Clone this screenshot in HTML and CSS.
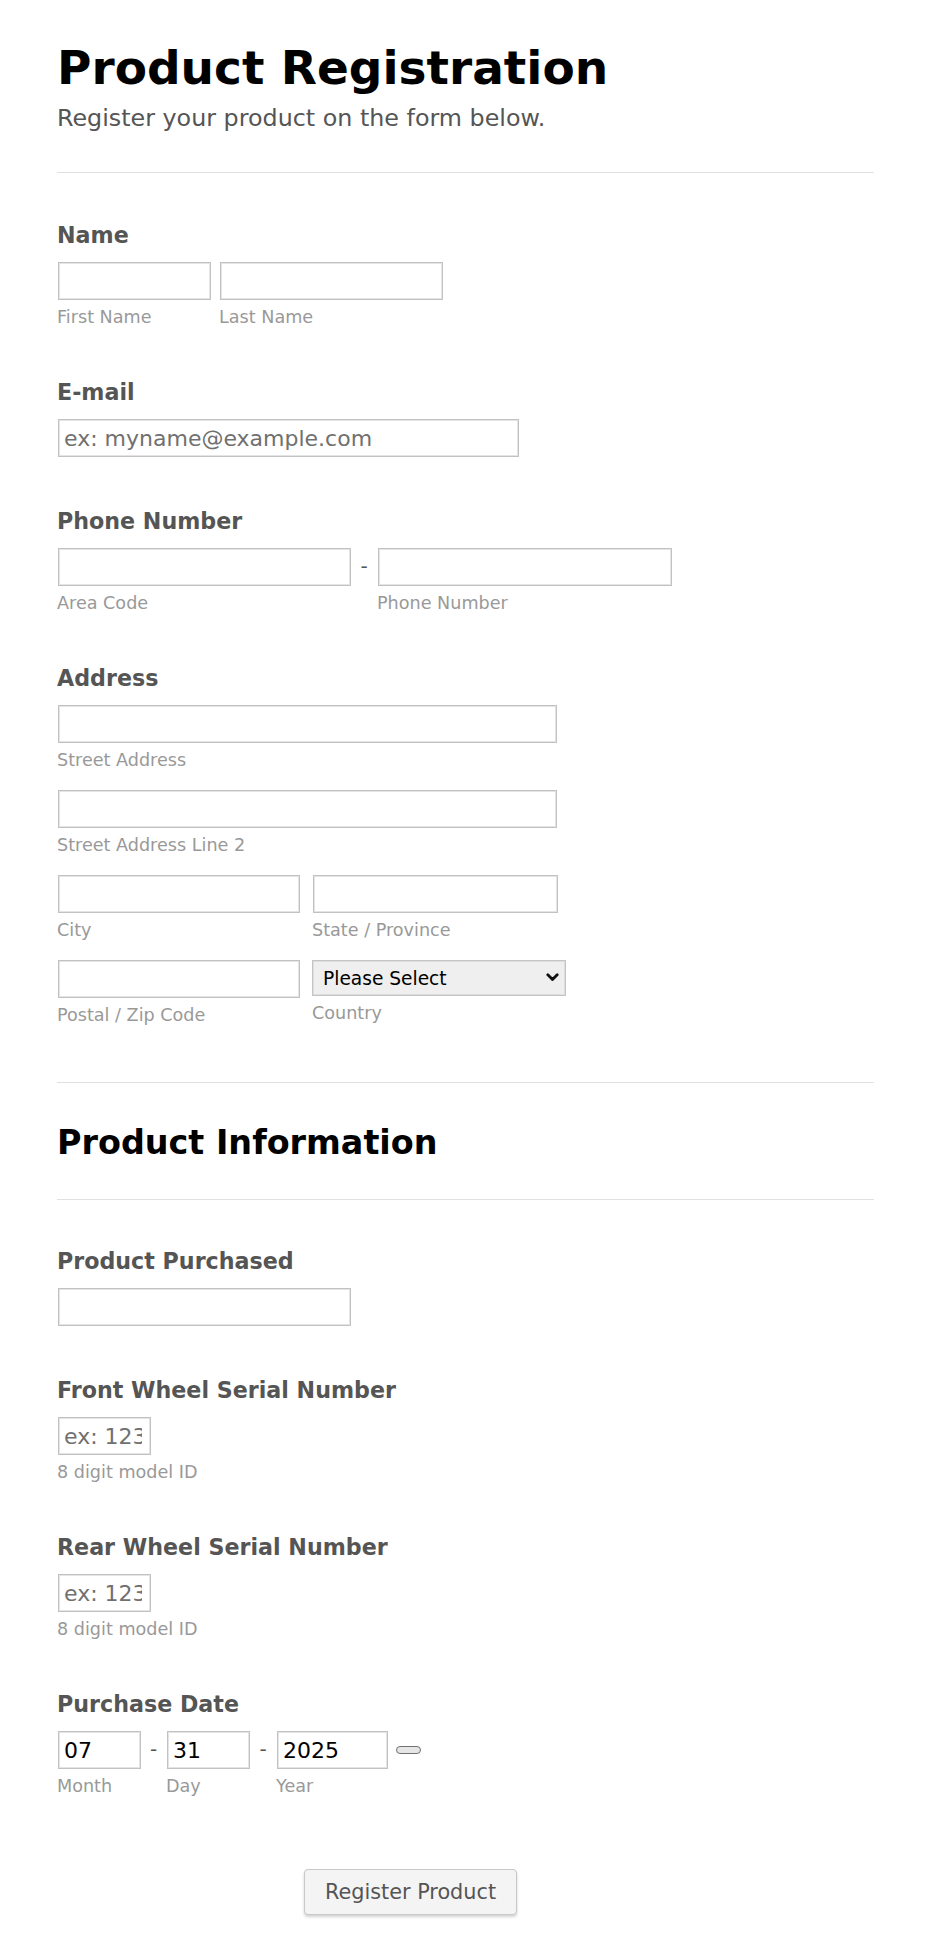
FILE: index.html
```html
<!DOCTYPE html>
<html lang="en">
<head>
<meta charset="utf-8">
<title>Product Registration</title>
<link rel="stylesheet" href="styles.css">
</head>
<body>
<form class="form">
  <header class="header">
    <h1 class="title">Product Registration</h1>
    <p class="subtitle">Register your product on the form below.</p>
  </header>
  <hr class="divider">

  <div class="fields">
    <div class="field">
      <label class="label">Name</label>
      <div class="row gap8">
        <div class="col"><input class="input w-first" type="text"><span class="sub">First Name</span></div>
        <div class="col"><input class="input w-last" type="text"><span class="sub">Last Name</span></div>
      </div>
    </div>

    <div class="field">
      <label class="label">E-mail</label>
      <input class="input w-email" type="text" placeholder="ex: myname@example.com">
    </div>

    <div class="field">
      <label class="label">Phone Number</label>
      <div class="row">
        <div class="col"><input class="input w-phone" type="text"><span class="sub">Area Code</span></div>
        <span class="sep sep-phone">-</span>
        <div class="col"><input class="input w-phone2" type="text"><span class="sub">Phone Number</span></div>
      </div>
    </div>

    <div class="field">
      <label class="label">Address</label>
      <div class="address">
        <div class="col"><input class="input w-street" type="text"><span class="sub">Street Address</span></div>
        <div class="col"><input class="input w-street" type="text"><span class="sub">Street Address Line 2</span></div>
        <div class="row gap12">
          <div class="col"><input class="input w-city" type="text"><span class="sub">City</span></div>
          <div class="col"><input class="input w-state" type="text"><span class="sub">State / Province</span></div>
        </div>
        <div class="row gap12">
          <div class="col"><input class="input w-city" type="text"><span class="sub">Postal / Zip Code</span></div>
          <div class="col">
            <div class="select-wrap">
              <select class="select"><option>Please Select</option></select>
              <svg class="chev" width="13" height="9" viewBox="0 0 13 9"><path d="M1.8 1.8 L6.5 6.6 L11.2 1.8" fill="none" stroke="#111" stroke-width="2.8" stroke-linecap="round" stroke-linejoin="round"/></svg>
            </div>
            <span class="sub">Country</span>
          </div>
        </div>
      </div>
    </div>
  </div>

  <hr class="divider divider-section">
  <h2 class="section">Product Information</h2>
  <hr class="divider divider-after">

  <div class="fields">
    <div class="field">
      <label class="label">Product Purchased</label>
      <input class="input w-phone" type="text">
    </div>

    <div class="field">
      <label class="label">Front Wheel Serial Number</label>
      <div class="col"><input class="input w-serial" type="text" placeholder="ex: 12345678"><span class="sub">8 digit model ID</span></div>
    </div>

    <div class="field">
      <label class="label">Rear Wheel Serial Number</label>
      <div class="col"><input class="input w-serial" type="text" placeholder="ex: 12345678"><span class="sub">8 digit model ID</span></div>
    </div>

    <div class="field">
      <label class="label">Purchase Date</label>
      <div class="row">
        <div class="col"><input class="input w-month" type="text" value="07"><span class="sub">Month</span></div>
        <span class="sep sep-d1">-</span>
        <div class="col"><input class="input w-month" type="text" value="31"><span class="sub">Day</span></div>
        <span class="sep sep-d2">-</span>
        <div class="col"><input class="input w-year" type="text" value="2025"><span class="sub">Year</span></div>
        <button class="picker" type="button" aria-label="Pick a date"></button>
      </div>
    </div>
  </div>

  <div class="buttons">
    <button class="submit" type="button">Register Product</button>
  </div>
</form>
</body>
</html>
```

FILE: styles.css
```css
html, body {
  margin: 0;
  padding: 0;
  background: #fff;
}

body {
  font-family: "DejaVu Sans", Verdana, sans-serif;
  color: #555;
}

.form {
  width: 817px;
  padding: 0 0 40px 57px;
}

.header {
  padding-top: 40px;
}

.title {
  margin: 0;
  font-size: 47px;
  line-height: 56px;
  font-weight: bold;
  color: #000;
}

.subtitle {
  margin: 8px 0 0;
  font-size: 23.8px;
  line-height: 28px;
  color: #555;
}

.divider {
  margin: 40px 0 0;
  border: 0;
  height: 1px;
  background: #e0e0e0;
}

.divider-section {
  margin-top: 56px;
}

.section {
  margin: 40px 0 0;
  font-size: 33.4px;
  line-height: 40px;
  font-weight: bold;
  color: #000;
}

.divider-after {
  margin-top: 36px;
}

.fields {
  display: flex;
  flex-direction: column;
  gap: 51px;
  padding-top: 49px;
}

.divider-after + .fields {
  padding-top: 48px;
}

.field {
  display: flex;
  flex-direction: column;
  align-items: flex-start;
}

.label {
  display: block;
  font-size: 22.2px;
  line-height: 26px;
  font-weight: bold;
  color: #555;
  margin-bottom: 14px;
}

.row {
  display: flex;
  align-items: flex-start;
}

.gap8 { gap: 8px; }
.gap12 { gap: 12px; }

.col {
  display: flex;
  flex-direction: column;
  align-items: flex-start;
}

.address {
  display: flex;
  flex-direction: column;
  gap: 19px;
}

.input {
  box-sizing: border-box;
  height: 38px;
  margin: 0 0 0 1px;
  padding: 0 8px 0 5px;
  border: 1px solid #c2c2c2;
  box-shadow: inset 0 0 0 1px #e4e4e4;
  border-radius: 0;
  background: #fff;
  font-family: "DejaVu Sans", Verdana, sans-serif;
  font-size: 22px;
  color: #000;
  outline: none;
}

.input::placeholder {
  color: #707070;
  opacity: 1;
}

.w-first { width: 153px; }
.w-last { width: 223px; }
.w-email { width: 461px; }
.w-phone { width: 293px; }
.w-phone2 { width: 294px; }
.w-street { width: 499px; }
.w-city { width: 242px; }
.w-state { width: 245px; }
.w-serial { width: 93px; }
.w-month { width: 83px; }
.w-year { width: 111px; }

.sub {
  display: block;
  margin-top: 7px;
  font-size: 17.6px;
  line-height: 21px;
  color: #999;
}

.sep {
  display: block;
  height: 38px;
  line-height: 36px;
  font-size: 20px;
  text-align: center;
  color: #555;
}

.sep-phone { width: 26px; }
.sep-d1 { width: 25px; }
.sep-d2 { width: 26px; }

.select-wrap {
  position: relative;
  width: 254px;
  height: 36px;
}

.select {
  -webkit-appearance: none;
  appearance: none;
  box-sizing: border-box;
  width: 254px;
  height: 36px;
  margin: 0;
  padding: 0 0 0 10px;
  border: 1px solid #c4c4c4;
  box-shadow: inset 0 0 0 1px #dedede;
  border-radius: 0;
  background: #efefef;
  font-family: "DejaVu Sans", Verdana, sans-serif;
  font-size: 18.6px;
  color: #000;
}

.chev {
  position: absolute;
  right: 7px;
  top: 13px;
  pointer-events: none;
}

.picker {
  width: 25px;
  height: 8px;
  margin: 15px 0 0 8px;
  padding: 0;
  border: 1px solid #707070;
  border-radius: 4px;
  background: #e6e6e6;
}

.buttons {
  display: flex;
  padding: 72px 0 0 247px;
}

.submit {
  box-sizing: border-box;
  width: 213px;
  height: 46px;
  padding: 0;
  border: 1px solid #c8c8c8;
  border-radius: 4px;
  background: #f4f4f4;
  box-shadow: 0 2px 3px rgba(0, 0, 0, 0.18);
  font-family: "DejaVu Sans", Verdana, sans-serif;
  font-size: 20.8px;
  color: #555;
}
```
